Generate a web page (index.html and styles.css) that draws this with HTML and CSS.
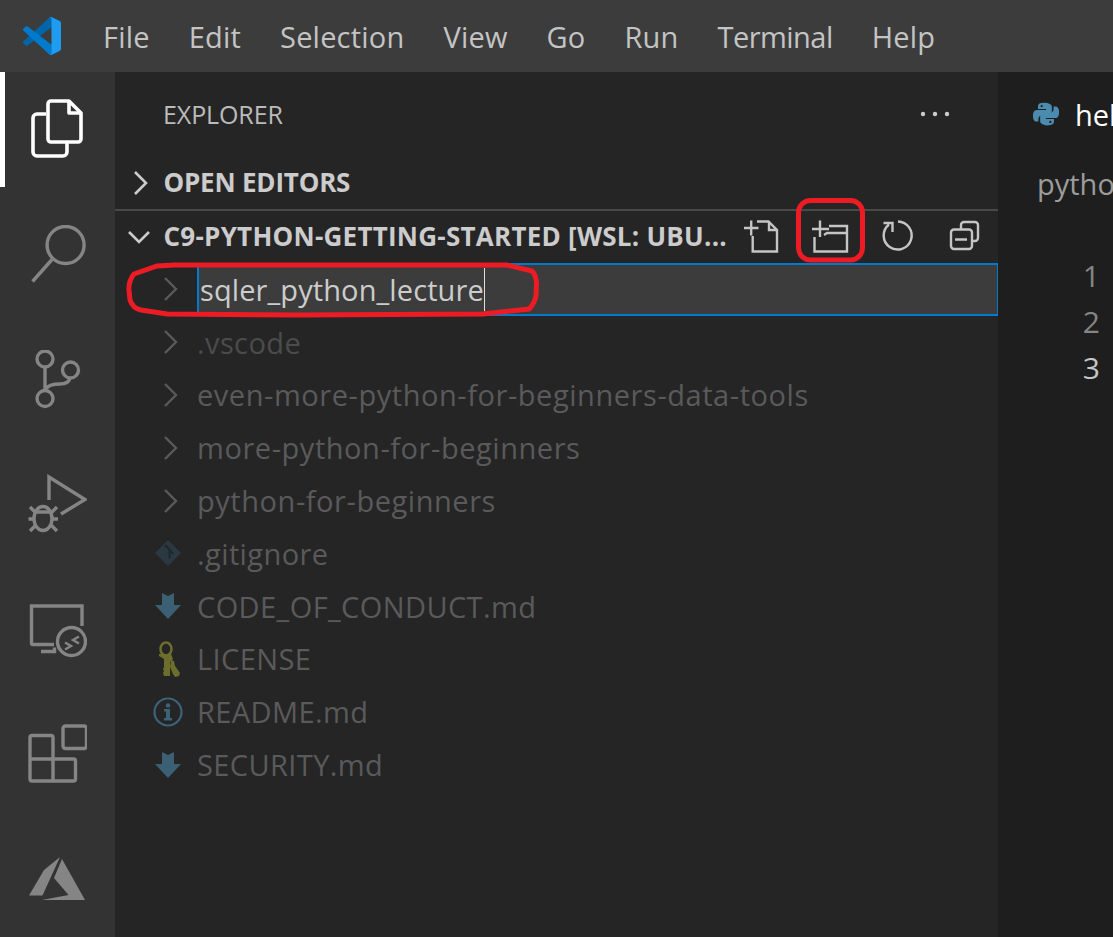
FILE: index.html
```
<!DOCTYPE html>
<html lang="en">
<head>
<meta charset="utf-8">
<title>VS Code Explorer</title>
<link rel="stylesheet" href="styles.css">
</head>
<body>
<div class="app">
  <header class="titlebar">
    <svg class="logo" viewBox="0 0 100 100">
      <path fill="#0065A9" d="M96.5 10.8 75.9.9a6.2 6.2 0 0 0-7.1 1.2L1.4 63.6a4.2 4.2 0 0 0 0 6.2l5.5 5a4.2 4.2 0 0 0 5.3.2L93.4 13.3c2.7-2.1 6.6-.1 6.6 3.3v-.2a6.2 6.2 0 0 0-3.5-5.6Z"/>
      <path fill="#007ACC" d="M96.5 89.2 75.9 99.1a6.2 6.2 0 0 1-7.1-1.2L1.4 36.4a4.2 4.2 0 0 1 0-6.2l5.5-5a4.2 4.2 0 0 1 5.3-.2l81.2 61.7c2.7 2.1 6.6.1 6.6-3.3v.2a6.2 6.2 0 0 1-3.5 5.6Z"/>
      <path fill="#1F9CF0" d="M75.9 99.1a6.2 6.2 0 0 1-7.1-1.2c2.3 2.3 6.2.7 6.2-2.6V4.7c0-3.3-3.9-4.9-6.2-2.6a6.2 6.2 0 0 1 7.1-1.2l20.6 9.9a6.2 6.2 0 0 1 3.5 5.6v66.9a6.2 6.2 0 0 1-3.5 5.6Z"/>
    </svg>
    <nav class="menu">
      <span>File</span><span>Edit</span><span>Selection</span><span>View</span><span>Go</span><span>Run</span><span class="menu-term">Terminal</span><span>Help</span>
    </nav>
  </header>
  <div class="main">
    <aside class="activity">
      <div class="active-mark"></div>
      <svg class="act act-files" viewBox="27 99 60 60"><path class="white" d="M46 114H37a4 4 0 0 0-4 4v34a4 4 0 0 0 4 4h26a4 4 0 0 0 4-4v-9"/><path class="white" d="M51 101h18l12 12v26a3 3 0 0 1-3 3H51a3 3 0 0 1-3-3V104a3 3 0 0 1 3-3Z"/><path class="white" d="M69 101v12h12"/></svg>
      <svg class="act act-search" viewBox="27 225 60 60"><circle class="dim" cx="65.6" cy="245" r="18.5"/><path class="dim" d="M52 259.5 32.5 281.5"/></svg>
      <svg class="act act-git" viewBox="27 350 60 60"><circle class="dim" cx="45" cy="359" r="8"/><circle class="dim" cx="70.5" cy="370" r="8"/><circle class="dim" cx="45" cy="398.5" r="8"/><path class="dim" d="M45 367v24M46 389c2-4 7-5 14-5 6 0 9-2 10-6"/></svg>
      <svg class="act act-debug" viewBox="27 474 60 60"><path class="dim" d="M49 500V477l36 22.5-24 14.5"/><ellipse class="dim" cx="43" cy="518.500" rx="9" ry="12"/><path class="dim" d="M34 512h18M30 507l6 6M57 507l-6 6M28.500 519h6.500M58 519h-6.500M30 531l6-6M57 531l-6-6"/></svg>
      <svg class="act act-remote" viewBox="27 604 60 60"><path class="dim" d="M82 626V606H31.500v37a1.500 1.500 0 0 0 1.500 1.500h21M41 651.500h13.500v-4"/><circle class="dim" cx="71.500" cy="641.500" r="14"/><path class="dim thin" d="M65 642.500l6 3.500-6 3.500M79 636.500l-6 3.500 6 3.500"/></svg>
      <svg class="act act-ext" viewBox="27 724 60 60"><rect class="dim" x="63" y="726" width="23.500" height="22.500" rx="2.500"/><path class="dim" d="M30 737.500a2 2 0 0 1 2-2h19a2 2 0 0 1 2 2V781H32a2 2 0 0 1-2-2V737.500ZM30 759h43.500a2 2 0 0 1 2 2v18a2 2 0 0 1-2 2H53"/></svg>
      <svg class="act act-azure" viewBox="27 857 60 60"><path class="fill" d="M60 857 44 870 29 895.500h13.500ZM62 859 54 878 68.500 895 42 900H85Z"/></svg>
    </aside>
    <section class="sidebar">
      <div class="side-title">
        <span>EXPLORER</span>
        <svg class="dots" viewBox="0 0 30 6"><circle cx="3" cy="3" r="2.200"/><circle cx="15" cy="3" r="2.200"/><circle cx="27" cy="3" r="2.200"/></svg>
      </div>
      <div class="section-head">
        <svg class="chev-right" viewBox="0 0 16 26"><path d="M2 2l11 11L2 24"/></svg>
        <span>OPEN EDITORS</span>
      </div>
      <div class="section-head project">
        <svg class="chev-down" viewBox="0 0 24 15"><path d="M2 2l10 10L22 2"/></svg>
        <span class="project-name">C9-PYTHON-GETTING-STARTED [WSL: UBU...</span>
        <div class="tools">
          <svg class="tool" viewBox="743 214 40 40"><path d="M744 226h14.500M751.200 218.500v15M752.700 234v15.500H777V228l-8.500-8.500H757M769 220v8h8"/></svg>
          <svg class="tool tool-folder" viewBox="811 214 40 40"><path d="M812 227h17M820 218.500V235M814.500 235v14.500H847V224H829M824 233l3-2h20"/></svg>
          <svg class="tool tool-refresh" viewBox="879 216 40 40"><path d="M889 224.500a14 14 0 1 0 9-3M883.500 223H892.500V232"/></svg>
          <svg class="tool tool-collapse" viewBox="947 216 40 40"><path d="M961 229v-4a3 3 0 0 1 3-3h11a3 3 0 0 1 3 3v13a3 3 0 0 1-3 3h-3M954 229.500h15a3 3 0 0 1 3 3V246a3 3 0 0 1-3 3H954a3 3 0 0 1-3-3V232.500a3 3 0 0 1 3-3ZM955 239.500h12"/></svg>
        </div>
      </div>
      <div class="tree">
        <div class="row">
          <div class="ico"><svg class="chev-tree" viewBox="0 0 16 26"><path d="M2 2l11 11L2 24"/></svg></div>
          <div class="rename"><span>sqler_python_lecture</span><i class="caret"></i></div>
        </div>
        <div class="row faint">
          <div class="ico"><svg class="chev-tree" viewBox="0 0 16 26"><path d="M2 2l11 11L2 24"/></svg></div><span>.vscode</span>
        </div>
        <div class="row folder">
          <div class="ico"><svg class="chev-tree" viewBox="0 0 16 26"><path d="M2 2l11 11L2 24"/></svg></div><span>even-more-python-for-beginners-data-tools</span>
        </div>
        <div class="row folder">
          <div class="ico"><svg class="chev-tree" viewBox="0 0 16 26"><path d="M2 2l11 11L2 24"/></svg></div><span>more-python-for-beginners</span>
        </div>
        <div class="row folder">
          <div class="ico"><svg class="chev-tree" viewBox="0 0 16 26"><path d="M2 2l11 11L2 24"/></svg></div><span>python-for-beginners</span>
        </div>
        <div class="row">
          <div class="ico"><svg class="file-ico" viewBox="0 0 26 26"><path fill="#293841" d="M13 0 26 13 13 26 0 13Z"/><path fill="none" stroke="#1f272c" stroke-width="2" d="M10 5l4.500 4.500v9M14.500 10l4 4"/></svg></div><span>.gitignore</span>
        </div>
        <div class="row">
          <div class="ico"><svg class="file-ico" viewBox="0 0 26 28"><path fill="#3b5f73" d="M7 1 13 4 19 1V13H26L13 27 0 13H7Z"/></svg></div><span>CODE_OF_CONDUCT.md</span>
        </div>
        <div class="row">
          <div class="ico"><svg class="file-keys" viewBox="0 0 26 36"><ellipse fill="none" stroke="#6d6d2c" stroke-width="2.500" cx="11" cy="8" rx="5.500" ry="6.500"/><path fill="#6d6d2c" d="M4 13h12l2 5-3 3v14H9l-1-3 1-2-1-2 1-2v-8l-5-3ZM16 19l3 1 1 5 5 7-1 3-4 1-2-3-3-7Z"/></svg></div><span>LICENSE</span>
        </div>
        <div class="row">
          <div class="ico"><svg class="file-info" viewBox="0 0 30 30"><circle cx="15" cy="15" r="13.500" fill="none" stroke="#3b6277" stroke-width="2.200"/><circle cx="15" cy="8.500" r="2.300" fill="#3b6277"/><path fill="#3b6277" d="M11 12h6v9h2v2.500h-8V21h2v-6.500h-2Z"/></svg></div><span>README.md</span>
        </div>
        <div class="row">
          <div class="ico"><svg class="file-ico" viewBox="0 0 26 28"><path fill="#3b5f73" d="M7 1 13 4 19 1V13H26L13 27 0 13H7Z"/></svg></div><span>SECURITY.md</span>
        </div>
      </div>
    </section>
    <main class="editor">
      <div class="tab">
        <svg class="py" viewBox="0 0 24 24">
          <path id="snake" fill="#4b8bb0" d="M12 1.500c-1.700 0-3.200.15-4.400.4C5.100 2.400 4.600 3.500 4.600 5.200v2.200h7.500v.8H3.600c-1.500 0-2.900.9-3.300 2.700-.5 2-.5 3.300 0 5.400.4 1.600 1.300 2.700 2.900 2.700h1.800v-2.500c0-1.800 1.600-3.400 3.400-3.400h6.100c1.600 0 2.900-1.300 2.900-2.900V5.200c0-1.500-1.300-2.700-2.900-3C13.800 1.800 12.900 1.500 12 1.500ZM8 3.700c.5 0 1 .4 1 1s-.4 1-1 1-1-.4-1-1 .4-1 1-1Z"/>
          <use href="#snake" transform="rotate(180 12 12)"/>
        </svg>
        <span>hello.py</span>
      </div>
      <div class="crumb">python-for-beginners</div>
      <div class="lines">
        <div>1</div><div>2</div><div class="current">3</div>
      </div>
    </main>
  </div>
  <svg class="notes" viewBox="0 0 1113 937">
    <rect x="798.500" y="200.500" width="64" height="59.500" rx="12"/>
    <path d="M175 265 157 266 134 274C130 279 128.500 283 129 290L130 300C132 306 136 309 141 310L167 314 300 315 483 314 529 309C533 305 535 301 536 296L536.500 283C536 277 534 273 532 271L507 265Z"/>
  </svg>
</div>
</body>
</html>
```
FILE: styles.css
```
* { box-sizing: border-box; }
html, body { margin: 0; padding: 0; height: 100%; overflow: hidden; background: #1e1e1e; }
body { font-family: "Open Sans", "Noto Sans", sans-serif; font-size: 29px; color: #ccc; }
.app { position: relative; width: 1113px; height: 937px; display: flex; flex-direction: column; overflow: hidden; }

.titlebar { height: 72px; flex: none; background: #3c3c3c; display: flex; align-items: center; padding-left: 23px; }
.logo { width: 38px; height: 38px; flex: none; }
.menu { display: flex; gap: 39px; margin-left: 42px; color: #c4c4c4; letter-spacing: 0.2px; }
.menu-term { letter-spacing: -0.55px; }

.main { flex: 1; display: flex; min-height: 0; }

.activity { position: relative; width: 115px; flex: none; background: #333; padding: 27px 0 0 27px; display: flex; flex-direction: column; }
.active-mark { position: absolute; left: 0; top: 0; width: 5px; height: 115px; background: #fff; }
.act { width: 60px; height: 60px; flex: none; display: block; fill: none; }
.act-search { margin-top: 66px; }
.act-git { margin-top: 65px; }
.act-debug { margin-top: 64px; }
.act-remote { margin-top: 70px; }
.act-ext { margin-top: 60px; }
.act-azure { margin-top: 73px; }
.white { fill: none; stroke: #fff; stroke-width: 3.6; stroke-linejoin: round; }
.dim { fill: none; stroke: #858585; stroke-width: 3.4; }
.thin { stroke-width: 2.4; }
.fill { fill: #858585; }

.sidebar { width: 883px; flex: none; background: #252526; display: flex; flex-direction: column; }
.side-title { height: 84px; flex: none; display: flex; align-items: center; justify-content: space-between; padding: 0 48px 1px 48px; font-size: 25px; color: #bbb; letter-spacing: -0.1px; }
.dots { width: 30px; height: 6px; fill: #ccc; }

.section-head { height: 53px; flex: none; display: flex; align-items: center; padding: 0 0 1px 48.500px; font-size: 26px; font-weight: 700; color: #ccc; position: relative; letter-spacing: -0.2px; }
.chev-right { position: absolute; left: 18px; top: 14px; width: 16px; height: 26px; fill: none; stroke: #ccc; stroke-width: 2.600; }
.chev-down { position: absolute; left: 12px; top: 19px; width: 24px; height: 15px; fill: none; stroke: #ccc; stroke-width: 2.600; }
.project { border-top: 2px solid #494949; height: 54px; padding-bottom: 2px; letter-spacing: 0.25px; }
.project-name { white-space: nowrap; flex: 1; min-width: 0; overflow: hidden; }
.tools { display: flex; flex: none; margin-right: 11px; gap: 28px; margin-top: -1px; }
.tool { width: 40px; height: 40px; flex: none; fill: none; stroke: #c5c5c5; stroke-width: 2.400; }

.tree { display: flex; flex-direction: column; }
.row { height: 52.8px; flex: none; display: flex; align-items: center; padding-left: 40px; color: #5a5a5a; white-space: nowrap; letter-spacing: 0.4px; }
.folder { letter-spacing: 0.55px; }
.faint { color: #4b4b4b; }
.ico { width: 26px; height: 36px; flex: none; margin-right: 16px; display: flex; align-items: center; justify-content: center; }
.chev-tree { width: 16px; height: 26px; flex: none; fill: none; stroke: #5a5a5a; stroke-width: 2.400; margin-left: 6px; }
.file-ico { width: 26px; height: 28px; flex: none; display: block; }
.file-keys { width: 26px; height: 36px; flex: none; display: block; }
.file-info { width: 30px; height: 30px; flex: none; display: block; }
.rename { flex: 1; align-self: stretch; background: #3c3c3c; border: 2px solid #007acc; border-right-width: 1.500px; color: #ccc; display: flex; align-items: center; padding-left: 1px; letter-spacing: 0.1px; }
.caret { width: 1.500px; height: 43px; background: #ddd; flex: none; }

.editor { flex: 1; min-width: 0; background: #1e1e1e; overflow: hidden; white-space: nowrap; display: flex; flex-direction: column; }
.tab { height: 84px; flex: none; display: flex; align-items: center; padding-left: 35px; gap: 16px; color: #fff; }
.py { width: 26px; height: 28px; flex: none; }
.crumb { height: 54px; flex: none; padding-left: 39px; color: #9c9c9c; display: flex; align-items: center; }
.lines { margin-top: 43px; width: 102px; text-align: right; color: #858585; font-size: 30px; line-height: 46px; }
.current { color: #c6c6c6; }

.notes { position: absolute; left: 0; top: 0; width: 1113px; height: 937px; fill: none; stroke: #ed1c24; stroke-width: 5; pointer-events: none; }
```
